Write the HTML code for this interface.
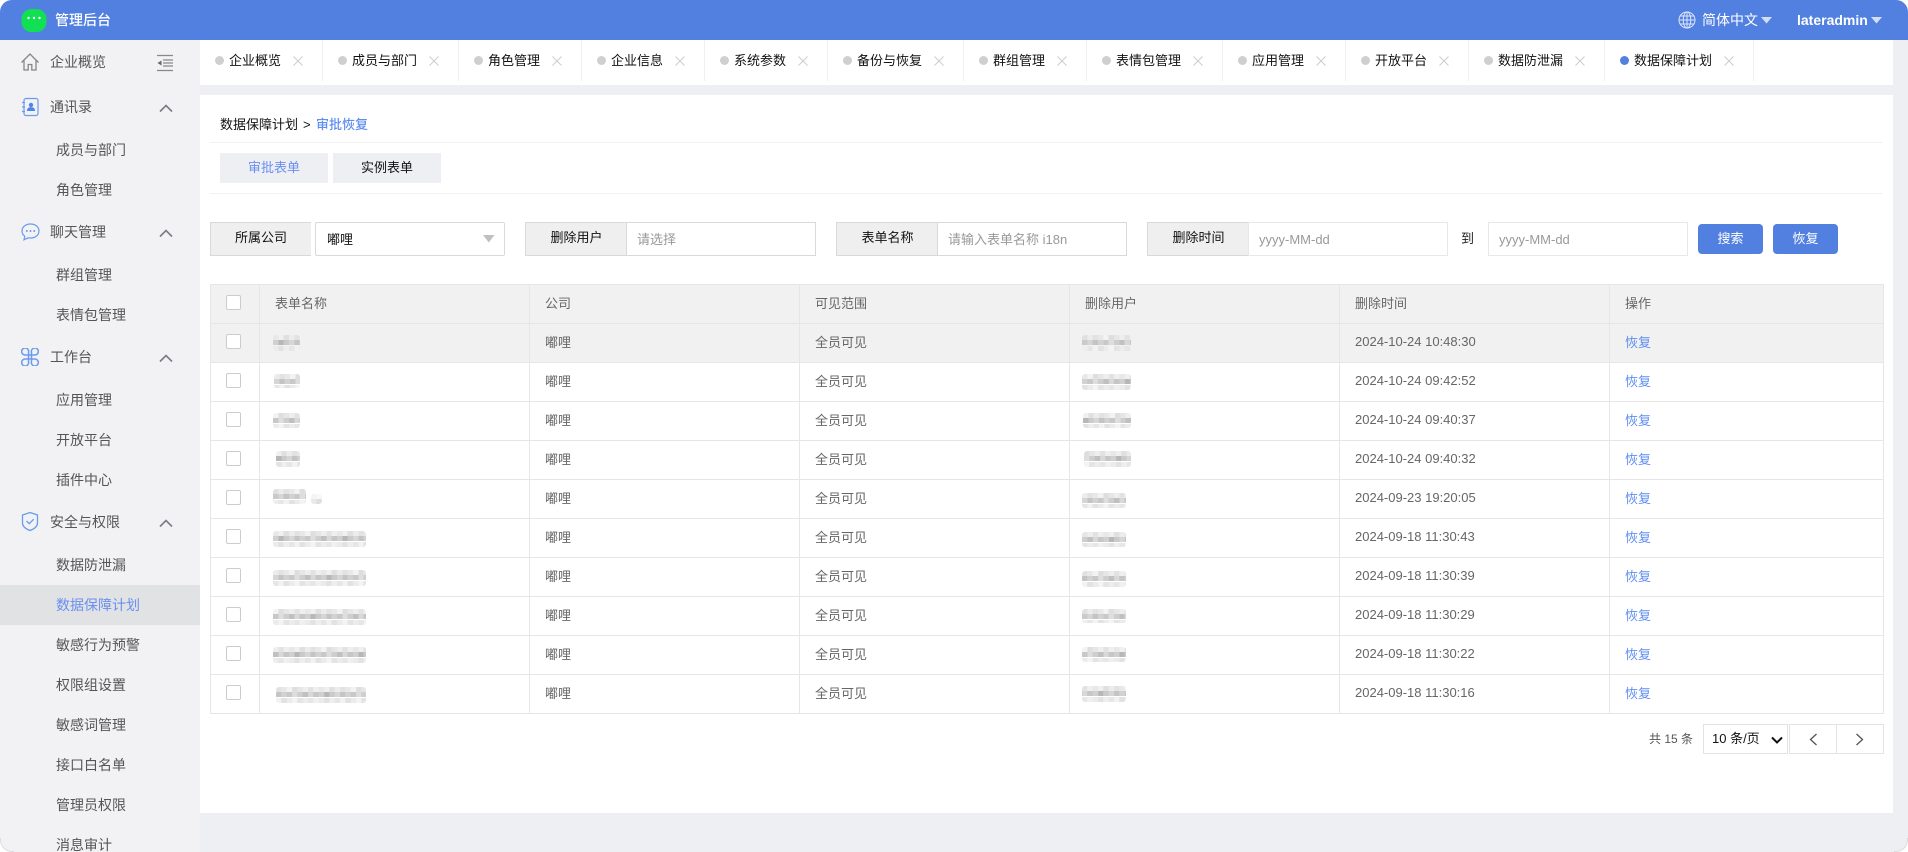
<!DOCTYPE html>
<html lang="zh-CN"><head><meta charset="utf-8"><title>管理后台</title>
<style>
*{box-sizing:border-box}
html,body{margin:0;padding:0;width:1908px;height:852px;overflow:hidden;background:#fff}
body{font-family:"Liberation Sans","Noto Sans CJK SC",sans-serif;font-size:13px;color:#222}
:root{
--a:linear-gradient(90deg,#e8e8e8 0 5.33px,#f0f0f0 0 10.66px,#e0e0e0 0 16px,#ececec 0 21.3px,#e2e2e2 0 26.6px,#e8e8e8 0 32px,#f3f3f3 0 37.3px,#dedede 0 42.6px,#e6e6e6 0 48px,#eee 0 53.3px,#e2e2e2 0 58.6px,#efefef 0 64px);
--b:linear-gradient(90deg,#d0d0d0 0 5.33px,#b4b8b6 0 10.66px,#cacaca 0 16px,#d6d6d6 0 21.3px,#c4c4c4 0 26.6px,#d2d2d2 0 32px,#c8c8c8 0 37.3px,#dedede 0 42.6px,#cecece 0 48px,#bfc1c0 0 53.3px,#d8d8d8 0 58.6px,#c6c6c6 0 64px);
--c:linear-gradient(90deg,#ebebeb 0 5.33px,#e2e2e2 0 10.66px,#eee 0 16px,#e6e6e6 0 21.3px,#f2f2f2 0 26.6px,#e2e2e2 0 32px,#ebebeb 0 37.3px,#f4f4f4 0 42.6px,#e4e4e4 0 48px,#ececec 0 53.3px,#e6e6e6 0 58.6px,#f0f0f0 0 64px);
}
#app{position:absolute;left:0;top:0;width:1908px;height:852px;background:#eeeff3;border-radius:12px;overflow:hidden}
.cn{position:absolute;width:14px;height:14px;z-index:5;border:0 solid #dcdcde}
.a{position:absolute;white-space:nowrap}
#top{position:absolute;left:0;top:0;width:1908px;height:40px;background:#5280e0;color:#fff;z-index:2}
#side{position:absolute;left:0;top:0;width:200px;height:852px;background:#f2f2f5}
.si{position:absolute;white-space:nowrap;font-size:14px;line-height:20px;color:#555}
.act{position:absolute;left:0;top:585px;width:200px;height:40px;background:#e1e2e4}
.chev{position:absolute;left:159px}
#tabs{position:absolute;left:200px;top:40px;width:1693px;height:45px;background:#fff}
.tab{position:absolute;top:0;height:41px;border-right:1px solid #f0f0f0}
.dot{position:absolute;left:15px;top:16px;width:9px;height:9px;border-radius:50%;background:#cfcfcf}
.tt{position:absolute;left:29px;top:10.5px;line-height:20px;font-size:13px;color:#111;white-space:nowrap}
.x{position:absolute;top:16px}
#main{position:absolute;left:200px;top:95px;width:1693px;height:718px;background:#fff}
.hl{position:absolute;left:210px;width:1673px;height:1px;background:#f2f2f2}
.btn{position:absolute;top:153px;width:108px;height:30px;background:#eeeff3;text-align:center;line-height:29px;font-size:13px;color:#111}
.lab{position:absolute;top:222px;height:34px;background:#efefef;border:1px solid #d9d9d9;text-align:center;line-height:30px;font-size:13px;color:#111}
.inp{position:absolute;top:222px;height:34px;background:#fff;border:1px solid #d9d9d9;line-height:34px;font-size:13px;color:#999;white-space:nowrap}
.blue{position:absolute;top:224px;height:30px;background:#5280e0;color:#fff;border-radius:4px;text-align:center;line-height:30px;font-size:13px}
table{position:absolute;left:210px;top:284px;width:1674px;border-collapse:collapse;table-layout:fixed;font-size:13px;color:#666}
td,th{height:39px;border:1px solid #e6e6e6;padding:0 0 4px 15px;text-align:left;font-weight:400;white-space:nowrap}
tr.g td,tr.g th{background:#f1f1f1}
.cb{position:absolute;left:226px;width:15px;height:15px;background:#fff;border:1px solid #ccc;border-radius:2px}
.m{position:absolute;border-radius:3px;background:var(--a) var(--x,0px) 0/64px 5.33px repeat-x,var(--b) var(--x,0px) 5.33px/64px 5.33px repeat-x,var(--c) var(--x,0px) 10.66px/64px 5.4px repeat-x}
a{color:#5f8ef0;text-decoration:none}
.pg{position:absolute;top:724px;height:30px;border:1px solid #e3e3e3;background:#fff}
</style></head><body>
<div id="app">

<div id="top">
<svg class="a" style="left:21px;top:8px" width="26" height="25" viewBox="0 0 26 25"><rect x=".5" y="1" width="25" height="23" rx="10" fill="#11e052"/><circle cx="7.500" cy="10" r="1.200" fill="#fff"/><circle cx="13" cy="10" r="1.200" fill="#fff"/><circle cx="18.500" cy="10" r="1.200" fill="#fff"/></svg>
<div class="a" style="left:55px;top:10px;font-size:14px;line-height:20px;font-weight:500;color:#fff">管理后台</div>
<svg class="a" style="left:1678px;top:11px" width="18" height="18" viewBox="0 0 18 18" fill="none" stroke="#dbe5fa" stroke-width="1"><circle cx="9" cy="9" r="8"/><ellipse cx="9" cy="9" rx="3.800" ry="8"/><path d="M9 1v16M1 9h16M2 5h14M2 13h14"/></svg>
<div class="a" style="left:1702px;top:10px;font-size:14px;line-height:20px;color:#fff">简体中文</div>
<svg class="a" style="left:1761px;top:17px" width="12" height="7"><path d="M0 0h11L5.500 6.500z" fill="#d3dff6"/></svg>
<div class="a" style="left:1797px;top:10px;font-size:14px;line-height:20px;color:#fff;font-weight:700">lateradmin</div>
<svg class="a" style="left:1871px;top:17px" width="12" height="7"><path d="M0 0h11L5.500 6.500z" fill="#d3dff6"/></svg>
</div>

<div id="side">
<div class="act"></div>
<svg class="a" style="left:20px;top:52px" width="20" height="20" viewBox="0 0 20 20" fill="none" stroke="#858585" stroke-width="1.300"><path d="M1.500 10.500L10 2l8.500 8.500M4 8.500V18h4.200v-5.500h3.600V18H16V8.500"/></svg>
<svg class="a" style="left:156px;top:54px" width="18" height="18" viewBox="0 0 18 18" fill="none" stroke="#888" stroke-width="1.200"><path d="M1 1.500h16M7 6h10M7 9h10M7 12h10M1 16.500h16"/><path d="M1.500 9L5.500 6.500v5z" fill="#666" stroke="none"/></svg>
<svg class="a" style="left:21px;top:97px" width="19" height="20" viewBox="0 0 19 20" fill="none" stroke="#6a9bec" stroke-width="1.200"><rect x="3" y="1.500" width="14" height="17" rx="2"/><path d="M1 5.500h3M1 10h3M1 14.500h3"/><circle cx="10" cy="8" r="2.200" fill="#4f86e6" stroke="none"/><path d="M6 14c0-3 1.500-3.800 4-3.800s4 .8 4 3.800z" fill="#4f86e6" stroke="none"/></svg>
<svg class="a" style="left:21px;top:223px" width="19" height="18" viewBox="0 0 19 18" fill="none" stroke="#6a9bec" stroke-width="1.200"><path d="M9.500 1C4.500 1 1 4 1 8c0 2.300 1 4 2.800 5.200L3 16.800l4.200-2c.7.200 1.500.2 2.300.2 5 0 8.500-3 8.500-7s-3.500-7-8.500-7z"/><circle cx="5.800" cy="8" r="1" fill="#6a9bec" stroke="none"/><circle cx="9.500" cy="8" r="1" fill="#6a9bec" stroke="none"/><circle cx="13.200" cy="8" r="1" fill="#6a9bec" stroke="none"/></svg>
<svg class="a" style="left:21px;top:348px" width="18" height="18" viewBox="0 0 18 18" fill="none" stroke="#6a9bec" stroke-width="1.500"><path d="M7 7H4.500A3.500 3.500 0 1 1 7.500 4.500V13.500A3.500 3.500 0 1 1 4.500 11H13.500A3.500 3.500 0 1 1 10.500 13.500V4.500A3.500 3.500 0 1 1 13.500 7H7z"/></svg>
<svg class="a" style="left:21px;top:511px" width="18" height="21" viewBox="0 0 18 21" fill="none" stroke="#6a9bec" stroke-width="1.300"><path d="M9 1.500l7.500 2.500v8c0 3.700-3.500 6-7.500 7.500C5 18 1.500 15.700 1.500 12V4z"/><path d="M5.500 10l2.700 2.700 4.500-4.500"/></svg>
<svg class="chev" style="top:104px" width="14" height="9" viewBox="0 0 14 9" fill="none" stroke="#7b7b80" stroke-width="1.600"><path d="M1 7.500L7 1.500l6 6"/></svg>
<svg class="chev" style="top:229px" width="14" height="9" viewBox="0 0 14 9" fill="none" stroke="#7b7b80" stroke-width="1.600"><path d="M1 7.500L7 1.500l6 6"/></svg>
<svg class="chev" style="top:354px" width="14" height="9" viewBox="0 0 14 9" fill="none" stroke="#7b7b80" stroke-width="1.600"><path d="M1 7.500L7 1.500l6 6"/></svg>
<svg class="chev" style="top:519px" width="14" height="9" viewBox="0 0 14 9" fill="none" stroke="#7b7b80" stroke-width="1.600"><path d="M1 7.500L7 1.500l6 6"/></svg>
<div class="si" style="left:50px;top:52px">企业概览</div>
<div class="si" style="left:50px;top:97px">通讯录</div>
<div class="si" style="left:56px;top:140px">成员与部门</div>
<div class="si" style="left:56px;top:180px">角色管理</div>
<div class="si" style="left:50px;top:222px">聊天管理</div>
<div class="si" style="left:56px;top:265px">群组管理</div>
<div class="si" style="left:56px;top:305px">表情包管理</div>
<div class="si" style="left:50px;top:347px">工作台</div>
<div class="si" style="left:56px;top:390px">应用管理</div>
<div class="si" style="left:56px;top:430px">开放平台</div>
<div class="si" style="left:56px;top:470px">插件中心</div>
<div class="si" style="left:50px;top:512px">安全与权限</div>
<div class="si" style="left:56px;top:555px">数据防泄漏</div>
<div class="si" style="left:56px;top:595px;color:#6a8ff0">数据保障计划</div>
<div class="si" style="left:56px;top:635px">敏感行为预警</div>
<div class="si" style="left:56px;top:675px">权限组设置</div>
<div class="si" style="left:56px;top:715px">敏感词管理</div>
<div class="si" style="left:56px;top:755px">接口白名单</div>
<div class="si" style="left:56px;top:795px">管理员权限</div>
<div class="si" style="left:56px;top:835px">消息审计</div>
</div>

<div id="tabs">
<div class="tab" style="left:0;width:123px"><i class="dot"></i><span class="tt">企业概览</span><svg class="x" style="left:93px" width="10" height="10" viewBox="0 0 10 10" stroke="#ccc" stroke-width="1"><path d="M.5.500l9 9M9.500.500l-9 9"/></svg></div>
<div class="tab" style="left:123px;width:136px"><i class="dot"></i><span class="tt">成员与部门</span><svg class="x" style="left:106px" width="10" height="10" viewBox="0 0 10 10" stroke="#ccc" stroke-width="1"><path d="M.5.500l9 9M9.500.500l-9 9"/></svg></div>
<div class="tab" style="left:259px;width:123px"><i class="dot"></i><span class="tt">角色管理</span><svg class="x" style="left:93px" width="10" height="10" viewBox="0 0 10 10" stroke="#ccc" stroke-width="1"><path d="M.5.500l9 9M9.500.500l-9 9"/></svg></div>
<div class="tab" style="left:382px;width:123px"><i class="dot"></i><span class="tt">企业信息</span><svg class="x" style="left:93px" width="10" height="10" viewBox="0 0 10 10" stroke="#ccc" stroke-width="1"><path d="M.5.500l9 9M9.500.500l-9 9"/></svg></div>
<div class="tab" style="left:505px;width:123px"><i class="dot"></i><span class="tt">系统参数</span><svg class="x" style="left:93px" width="10" height="10" viewBox="0 0 10 10" stroke="#ccc" stroke-width="1"><path d="M.5.500l9 9M9.500.500l-9 9"/></svg></div>
<div class="tab" style="left:628px;width:136px"><i class="dot"></i><span class="tt">备份与恢复</span><svg class="x" style="left:106px" width="10" height="10" viewBox="0 0 10 10" stroke="#ccc" stroke-width="1"><path d="M.5.500l9 9M9.500.500l-9 9"/></svg></div>
<div class="tab" style="left:764px;width:123px"><i class="dot"></i><span class="tt">群组管理</span><svg class="x" style="left:93px" width="10" height="10" viewBox="0 0 10 10" stroke="#ccc" stroke-width="1"><path d="M.5.500l9 9M9.500.500l-9 9"/></svg></div>
<div class="tab" style="left:887px;width:136px"><i class="dot"></i><span class="tt">表情包管理</span><svg class="x" style="left:106px" width="10" height="10" viewBox="0 0 10 10" stroke="#ccc" stroke-width="1"><path d="M.5.500l9 9M9.500.500l-9 9"/></svg></div>
<div class="tab" style="left:1023px;width:123px"><i class="dot"></i><span class="tt">应用管理</span><svg class="x" style="left:93px" width="10" height="10" viewBox="0 0 10 10" stroke="#ccc" stroke-width="1"><path d="M.5.500l9 9M9.500.500l-9 9"/></svg></div>
<div class="tab" style="left:1146px;width:123px"><i class="dot"></i><span class="tt">开放平台</span><svg class="x" style="left:93px" width="10" height="10" viewBox="0 0 10 10" stroke="#ccc" stroke-width="1"><path d="M.5.500l9 9M9.500.500l-9 9"/></svg></div>
<div class="tab" style="left:1269px;width:136px"><i class="dot"></i><span class="tt">数据防泄漏</span><svg class="x" style="left:106px" width="10" height="10" viewBox="0 0 10 10" stroke="#ccc" stroke-width="1"><path d="M.5.500l9 9M9.500.500l-9 9"/></svg></div>
<div class="tab" style="left:1405px;width:149px"><i class="dot" style="background:#5280e0"></i><span class="tt">数据保障计划</span><svg class="x" style="left:119px" width="10" height="10" viewBox="0 0 10 10" stroke="#ccc" stroke-width="1"><path d="M.5.500l9 9M9.500.500l-9 9"/></svg></div>
</div>

<div id="main"></div>

<div class="a" style="left:220px;top:115px;line-height:20px;font-size:13px;color:#111">数据保障计划</div>
<div class="a" style="left:303px;top:115px;line-height:20px;font-size:13px;color:#111">&gt;</div>
<div class="a" style="left:316px;top:115px;line-height:20px;font-size:13px;color:#5f8ef0;font-weight:500">审批恢复</div>
<div class="hl" style="top:142px"></div>
<div class="btn" style="left:220px;color:#6a8ff0">审批表单</div>
<div class="btn" style="left:333px">实例表单</div>
<div class="hl" style="top:193px"></div>

<div class="lab" style="left:210px;width:101px;border-right:0">所属公司</div>
<div class="inp" style="left:315px;width:190px;border-radius:2px;color:#111;padding-left:11px">嘟哩</div>
<svg class="a" style="left:483px;top:235px" width="12" height="8"><path d="M0 0h11.500L5.750 7.500z" fill="#c0c0c0"/></svg>

<div class="lab" style="left:525px;width:102px;border-right:0">删除用户</div>
<div class="inp" style="left:626px;width:190px;padding-left:10px">请选择</div>

<div class="lab" style="left:836px;width:102px;border-right:0">表单名称</div>
<div class="inp" style="left:937px;width:190px;padding-left:10px">请输入表单名称 i18n</div>

<div class="lab" style="left:1147px;width:102px;border-right:0">删除时间</div>
<div class="inp" style="left:1248px;width:200px;padding-left:10px;border-color:#e8e8e8">yyyy-MM-dd</div>
<div class="a" style="left:1461px;top:229px;line-height:20px;font-size:13px;color:#222">到</div>
<div class="inp" style="left:1488px;width:200px;padding-left:10px;border-color:#e8e8e8">yyyy-MM-dd</div>

<div class="blue" style="left:1698px;width:65px">搜索</div>
<div class="blue" style="left:1773px;width:65px">恢复</div>

<table>
<colgroup><col style="width:49px"><col style="width:270px"><col style="width:270px"><col style="width:270px"><col style="width:270px"><col style="width:270px"><col></colgroup>
<tr class="g"><th></th><th>表单名称</th><th>公司</th><th>可见范围</th><th>删除用户</th><th>删除时间</th><th>操作</th></tr>
<tr class="g"><td></td><td></td><td>嘟哩</td><td>全员可见</td><td></td><td>2024-10-24 10:48:30</td><td><a href="#">恢复</a></td></tr>
<tr><td></td><td></td><td>嘟哩</td><td>全员可见</td><td></td><td>2024-10-24 09:42:52</td><td><a href="#">恢复</a></td></tr>
<tr><td></td><td></td><td>嘟哩</td><td>全员可见</td><td></td><td>2024-10-24 09:40:37</td><td><a href="#">恢复</a></td></tr>
<tr><td></td><td></td><td>嘟哩</td><td>全员可见</td><td></td><td>2024-10-24 09:40:32</td><td><a href="#">恢复</a></td></tr>
<tr><td></td><td></td><td>嘟哩</td><td>全员可见</td><td></td><td>2024-09-23 19:20:05</td><td><a href="#">恢复</a></td></tr>
<tr><td></td><td></td><td>嘟哩</td><td>全员可见</td><td></td><td>2024-09-18 11:30:43</td><td><a href="#">恢复</a></td></tr>
<tr><td></td><td></td><td>嘟哩</td><td>全员可见</td><td></td><td>2024-09-18 11:30:39</td><td><a href="#">恢复</a></td></tr>
<tr><td></td><td></td><td>嘟哩</td><td>全员可见</td><td></td><td>2024-09-18 11:30:29</td><td><a href="#">恢复</a></td></tr>
<tr><td></td><td></td><td>嘟哩</td><td>全员可见</td><td></td><td>2024-09-18 11:30:22</td><td><a href="#">恢复</a></td></tr>
<tr><td></td><td></td><td>嘟哩</td><td>全员可见</td><td></td><td>2024-09-18 11:30:16</td><td><a href="#">恢复</a></td></tr>
</table>

<i class="cb" style="top:295px"></i><i class="cb" style="top:334px"></i><i class="cb" style="top:373px"></i><i class="cb" style="top:412px"></i><i class="cb" style="top:451px"></i><i class="cb" style="top:490px"></i><i class="cb" style="top:529px"></i><i class="cb" style="top:568px"></i><i class="cb" style="top:607px"></i><i class="cb" style="top:646px"></i><i class="cb" style="top:685px"></i>

<i class="m" style="left:273px;top:335px;width:27px;height:16px"></i>
<i class="m" style="left:274px;top:374px;width:26px;height:14px;--x:-16px"></i>
<i class="m" style="left:273px;top:413px;width:27px;height:15px;--x:-32px"></i>
<i class="m" style="left:276px;top:451px;width:24px;height:16px;--x:-5.33px"></i>
<i class="m" style="left:273px;top:489px;width:33px;height:15px;--x:-10.66px"></i>
<i class="m" style="left:311px;top:494px;width:11px;height:10px;opacity:.45"></i>
<i class="m" style="left:273px;top:531px;width:93px;height:16px"></i>
<i class="m" style="left:273px;top:570px;width:93px;height:16px;--x:-16px"></i>
<i class="m" style="left:273px;top:609px;width:93px;height:16px;--x:-32px"></i>
<i class="m" style="left:273px;top:647px;width:93px;height:16px;--x:-48px"></i>
<i class="m" style="left:276px;top:687px;width:90px;height:16px;--x:-21.3px"></i>

<i class="m" style="left:1082px;top:335px;width:49px;height:17px;--x:-10.66px"></i>
<i class="m" style="left:1082px;top:374px;width:49px;height:16px;--x:-26.6px"></i>
<i class="m" style="left:1083px;top:413px;width:48px;height:15px;--x:-5.33px"></i>
<i class="m" style="left:1084px;top:451px;width:47px;height:16px;--x:-37.3px"></i>
<i class="m" style="left:1082px;top:493px;width:44px;height:15px;--x:-16px"></i>
<i class="m" style="left:1082px;top:532px;width:44px;height:15px;--x:-42.6px"></i>
<i class="m" style="left:1082px;top:571px;width:44px;height:16px;--x:-21.3px"></i>
<i class="m" style="left:1082px;top:609px;width:44px;height:14px;--x:-10.66px"></i>
<i class="m" style="left:1082px;top:647px;width:44px;height:15px;--x:-32px"></i>
<i class="m" style="left:1082px;top:686px;width:44px;height:16px;--x:-53.3px"></i>

<div class="a" style="left:1649px;top:729px;line-height:20px;font-size:12px;color:#555">共 15 条</div>
<div class="pg" style="left:1703px;width:85px;font-size:13px;color:#111;line-height:28px;padding-left:8px">10 条/页</div>
<svg class="a" style="left:1771px;top:736px" width="12" height="8" viewBox="0 0 12 8" fill="none" stroke="#111" stroke-width="2"><path d="M1 1.500l5 5 5-5"/></svg>
<div class="pg" style="left:1789px;width:48px"></div>
<div class="pg" style="left:1836px;width:48px"></div>
<svg class="a" style="left:1809px;top:733px" width="9" height="13" viewBox="0 0 9 13" fill="none" stroke="#555" stroke-width="1.300"><path d="M7.500 1L1.500 6.500l6 5.500"/></svg>
<svg class="a" style="left:1855px;top:733px" width="9" height="13" viewBox="0 0 9 13" fill="none" stroke="#555" stroke-width="1.300"><path d="M1.500 1l6 5.500-6 5.500"/></svg>

<i class="cn" style="left:0;bottom:0;border-left-width:1px;border-bottom-width:1px;border-bottom-left-radius:12px"></i>
<i class="cn" style="right:0;bottom:0;border-right-width:1px;border-bottom-width:1px;border-bottom-right-radius:12px"></i>
</div>
</body></html>
